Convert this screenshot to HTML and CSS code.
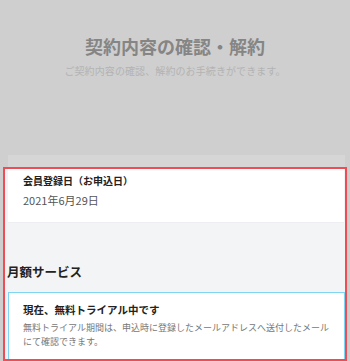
FILE: index.html
```html
<!DOCTYPE html>
<html lang="ja">
<head>
<meta charset="utf-8">
<link rel="stylesheet" href="styles.css">
</head>
<body>
<div class="header">
  <h1 class="title">契約内容の確認・解約</h1>
  <p class="subtitle">ご契約内容の確認、解約のお手続きができます。</p>
</div>
<div class="dim-strip"></div>
<div class="spot">
  <div class="card">
    <div class="card-label">会員登録日（お申込日）</div>
    <div class="card-value">2021年6月29日</div>
  </div>
  <div class="section">
    <h2 class="section-title">月額サービス</h2>
    <div class="notice">
      <div class="notice-title">現在、無料トライアル中です</div>
      <p class="notice-text">無料トライアル期間は、申込時に登録したメールアドレスへ送付したメールにて確認できます。</p>
    </div>
  </div>
</div>
</body>
</html>
```
FILE: styles.css
```css
html, body {
  margin: 0;
  padding: 0;
}
body {
  width: 350px;
  height: 361px;
  overflow: hidden;
  background: #cfcfcf;
  font-family: "Noto Sans CJK JP", "Noto Sans", sans-serif;
}
.header {
  height: 155px;
  padding-top: 34px;
  box-sizing: border-box;
  text-align: center;
}
.title {
  margin: 0;
  font-size: 18px;
  line-height: 24px;
  font-weight: 700;
  color: #858585;
}
.subtitle {
  margin: 6px 0 0;
  font-size: 10px;
  line-height: 14px;
  letter-spacing: 0.1px;
  color: #b3b3b3;
}
.dim-strip {
  height: 12px;
  margin: 0 5px 0 8px;
  background: #d6d6d6;
}
.spot {
  margin: 0 3px;
  height: 194px;
  box-sizing: border-box;
  border: 2px solid #ee4d55;
  background: #f3f4f6;
  overflow: hidden;
}
.card {
  margin: 0 1px 0 3px;
  height: 54px;
  box-sizing: border-box;
  padding: 5px 15px 0;
  background: #ffffff;
  border-bottom: 1px solid #eceef1;
}
.card-label {
  font-size: 10px;
  line-height: 14px;
  font-weight: 700;
  color: #222;
}
.card-value {
  margin-top: 4px;
  font-size: 11px;
  line-height: 16px;
  color: #555;
}
.section {
  padding: 40px 0 0 2px;
}
.section-title {
  margin: 0;
  font-size: 12.5px;
  line-height: 18px;
  font-weight: 700;
  color: #222;
}
.notice {
  margin: 11px 0 0 1px;
  border: 1px solid #7fd6f2;
  background: #ffffff;
  padding: 10px 12px 14px 14px;
}
.notice-title {
  font-size: 10.5px;
  line-height: 14px;
  font-weight: 700;
  color: #222;
}
.notice-text {
  margin: 4px 0 0;
  font-size: 9px;
  line-height: 14px;
  color: #777;
}
```
